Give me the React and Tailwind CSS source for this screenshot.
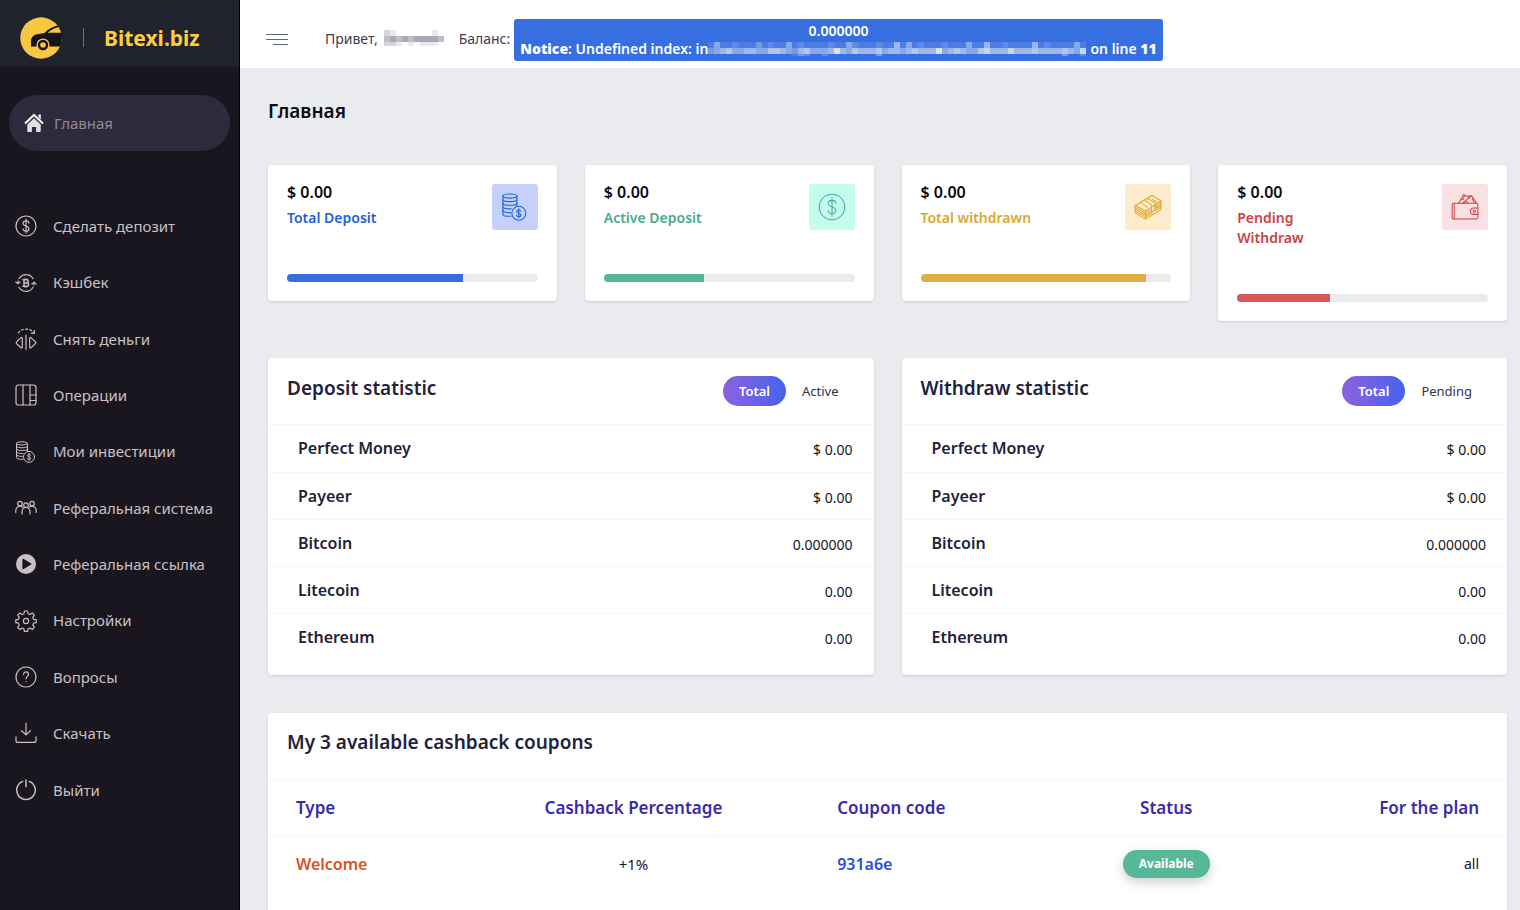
import React from "react";

const Icon = ({ children, className = "size-[22px]" }) => (
    <svg
        viewBox="0 0 22 22"
        className={`${className} shrink-0`}
        fill="none"
        stroke="currentColor"
        strokeWidth="1.2"
        strokeLinecap="round"
        strokeLinejoin="round"
        aria-hidden="true"
    >
        {children}
    </svg>
);

const DollarIcon = ({ className, thin }) => (
    <Icon className={className}>
        <g strokeWidth={thin ? 0.8 : 1.2}>
            <circle cx="11" cy="11" r="10" />
            <path d="M11 4v14M14 8.2c0-1.5-1.3-2.4-3-2.4s-3 .9-3 2.5c0 1.700 1.300 2.200 3 2.700s3 1 3 2.700c0 1.600-1.300 2.500-3 2.500s-3-.9-3-2.400" />
        </g>
    </Icon>
);

const CoinsIcon = ({ className, thin }) => (
    <Icon className={className}>
        <g strokeWidth={thin ? 0.85 : 1}>
            <ellipse cx="7" cy="2.400" rx="5.500" ry="1.600" />
            <path d="M1.500 2.400v14.200c0 1 2.200 1.700 5.500 1.700h.8M12.500 2.400v8" />
            <path d="M1.500 5.200c0 1 2.500 1.600 5.500 1.600s5.500-.6 5.500-1.600M1.500 8c0 1 2.500 1.600 5.500 1.600s5.500-.6 5.500-1.600M1.500 10.900c0 1 2.400 1.600 5.300 1.600h1.200M1.500 13.800c0 1 2.400 1.600 5.300 1.600h.6" />
            <circle cx="14" cy="15.900" r="5.500" />
            <path d="M14 12.400v7M15.600 14.200c-.2-.6-.8-.9-1.600-.9-1 0-1.600.5-1.600 1.200 0 .8.700 1.100 1.600 1.400s1.700.6 1.700 1.400-.7 1.300-1.700 1.300-1.600-.4-1.800-1.100" />
        </g>
    </Icon>
);

const CashIcon = () => (
    <Icon className="size-7">
        <g strokeWidth="0.8">
            <path d="M.9 9.800 14.200 2l7 4.100L9.200 14.200z" />
            <path d="M.9 9.800v5.800l8.300 4.900 12-7.500V6.100M9.200 14.200v6.300" />
            <path d="m.9 11.300 8.300 4.500 3.600-2.300M.9 12.700l8.300 4.600 4-2.500M.9 14.200l8.300 4.600 5-3.100M16.500 10.800l4.700-3M16.500 12.400l4.700-3M16.500 14l4.700-3" />
            <path d="m8.200 5.600 5.600 3.700v5.600l2.500-1.600V7.800l-5.600-3.700M5 7.400l5.700 3.900M14.500 5l3.300 2.100" />
        </g>
    </Icon>
);

const WalletIcon = () => (
    <Icon className="size-7">
        <g strokeWidth="0.8">
            <rect x=".9" y="8" width="20.200" height="12.500" rx="1.300" />
            <path d="M2.500 8v12.500M21.100 11.800h-3.300a2.500 2.500 0 0 0 0 5h3.300" />
            <circle cx="18.300" cy="14.300" r=".9" />
            <path d="M6 8 9.900 1.200l4.400 2.400M9 8l7.200-5.800L20 7.900M16.200 2.200l-2.800.2M7.600 5.300l1.900-.2 1-2.600M9.700 8a2.200 2.200 0 0 1 3.800 0M16.800 4.700l1.500 3.100" />
        </g>
    </Icon>
);

const CashbackIcon = () => (
    <Icon>
        <path d="M4 6.800a8 8 0 0 1 14-.1M18 15.200a8 8 0 0 1-14 .1M2.900 11.500a8 8 0 0 1 .3-2.700M19.100 10.500a8 8 0 0 1-.3 2.700" />
        <path d="m.8 9.800 2 2 2.400-1.700M21.200 12.200l-2-2-2.400 1.700" />
        <path
            d="M9 7.800h2.700a1.500 1.500 0 0 1 0 3.100H9zM9 10.900h3a1.600 1.600 0 0 1 0 3.300H9zM8 7.800h1M8 14.200h1M10 7v.8M12 7v.8M10 14.200v.8M12 14.200v.8"
            strokeWidth="1.500"
        />
    </Icon>
);

const FlipIcon = () => (
    <Icon>
        <path d="M11 7v14.500" />
        <path d="M7.300 10.200v9c0 .7-.8 1-1.300.6l-4.400-4.200a1.200 1.200 0 0 1 0-1.700L6 9.600c.5-.5 1.300-.1 1.300.6zM14.700 10.200v9c0 .7.800 1 1.300.6l4.400-4.200a1.200 1.200 0 0 0 0-1.700L16 9.600c-.5-.5-1.300-.1-1.300.6z" />
        <path d="M3.200 4.800A10.500 10.500 0 0 1 19 4.500" strokeDasharray="2 2.200" />
        <path d="m19.600 2.500-.4 3-2.900-.3" />
    </Icon>
);

const ColumnsIcon = () => (
    <Icon>
        <rect x="1" y="1" width="20" height="20" rx="2.500" />
        <path d="M8 1v20M15 1v20M15 11h6M15 16.500h6" />
    </Icon>
);

const PeopleIcon = () => (
    <Icon>
        <circle cx="11" cy="8.200" r="2.300" />
        <circle cx="5" cy="6.600" r="2.300" />
        <circle cx="17" cy="6.600" r="2.300" />
        <path d="M7 17v-2.500a4 4 0 0 1 8 0V17M.8 15.500v-2a4.200 4.200 0 0 1 6.800-3.300M21.200 15.500v-2a4.200 4.200 0 0 0-6.800-3.300" />
    </Icon>
);

const PlayIcon = () => (
    <Icon>
        <circle cx="11" cy="11" r="10" fill="currentColor" stroke="none" />
        <path d="M8 6.300v9.400l7.800-4.700z" fill="#19161f" stroke="#19161f" />
    </Icon>
);

const GearIcon = () => (
    <Icon>
        <circle cx="11" cy="11" r="2.600" />
        <path d="M9.400 1h3.200l.5 2.700 1.800.8 2.300-1.600 2.200 2.200-1.600 2.300.8 1.900 2.600.4v3l-2.600.5-.8 1.900 1.600 2.300-2.200 2.200-2.300-1.600-1.800.8-.5 2.600H9.400l-.5-2.600-1.800-.8-2.300 1.600-2.200-2.200 1.600-2.300-.8-1.900L.8 12.700v-3l2.600-.4.800-1.900-1.600-2.300 2.200-2.200 2.300 1.600 1.800-.8z" />
    </Icon>
);

const QuestionIcon = () => (
    <Icon>
        <circle cx="11" cy="11" r="10" />
        <path d="M8.500 8.300a2.500 2.500 0 1 1 3.900 2.100c-.9.700-1.400 1.200-1.400 2.300M11 15.500v.2" />
    </Icon>
);

const DownloadIcon = () => (
    <Icon>
        <path d="M11 1.200v11.600M6.600 8.700l4.400 4.200 4.400-4.200M1 14.800v3.600a2 2 0 0 0 2 2h16a2 2 0 0 0 2-2v-3.600" />
    </Icon>
);

const PowerIcon = () => (
    <Icon>
        <path d="M11 .9v6.900M7.700 2.400a9.300 9.300 0 1 0 6.600 0" strokeWidth="1.500" />
    </Icon>
);

const HomeIcon = () => (
    <svg viewBox="0 0 20 20" className="size-5 shrink-0" aria-hidden="true">
        <path d="M1 10.500 10 2l9 8.500" fill="none" stroke="#fff" strokeWidth="2" />
        <path d="M14.500 1.500h2.300v5l-2.300-2.200z" fill="#fff" />
        <path
            d="M10 5.200 3.300 11.500v6.200c0 .8.500 1.300 1.300 1.300h3.300v-5h4.200v5h3.300c.8 0 1.300-.5 1.300-1.300v-6.200z"
            fill="#e6dcde"
        />
    </svg>
);

const Logo = () => (
    <svg viewBox="0 0 42 42" className="size-[42px]" aria-hidden="true">
        <circle cx="21" cy="21" r="20.700" fill="#f7c744" />
        <path
            d="M11 29.500v-5c0-4.600 2.500-6.500 6.500-7.300l7-1.200c4.500-4.300 8.500-6.300 13.200-7.400l.8 1.300c-4 1-7.500 2.800-10.800 5.800h14c.5 4.800 0 9.500-1.500 13.800z"
            fill="#14141a"
        />
        <circle cx="23" cy="28" r="6.600" fill="#f7c744" />
        <circle cx="23" cy="28" r="4" fill="none" stroke="#14141a" strokeWidth="2.400" />
    </svg>
);

// each digit is the strength of one block, 0 - 9
const Mosaic = ({ rows, color, label, height, className }) => (
    <svg
        role="img"
        aria-label={label}
        viewBox={`0 0 ${rows[0].length * 6} ${height}`}
        className={`shrink-0 ${className}`}
        shapeRendering="crispEdges"
    >
        {rows.map((row, y) =>
            row.split("").map((v, x) => (
                <rect
                    key={`${x}-${y}`}
                    x={x * 6}
                    y={y * 6}
                    width="6"
                    height="6"
                    fill={color}
                    opacity={v / 10}
                />
            ))
        )}
    </svg>
);

const nameBlocks = ["2100000010", "3434344443", "2210101110"];
const pathBlocks = [
    "141121113121141211112114211121151412111211141151121111512111141",
    "345644554466543564445854655564554565558456544675557555655556547",
    "000000000000001320020000000030000000000000000000000000000003002",
];

const menu = [
    { label: "Сделать депозит", icon: <DollarIcon /> },
    { label: "Кэшбек", icon: <CashbackIcon /> },
    { label: "Снять деньги", icon: <FlipIcon /> },
    { label: "Операции", icon: <ColumnsIcon /> },
    { label: "Мои инвестиции", icon: <CoinsIcon /> },
    { label: "Реферальная система", icon: <PeopleIcon /> },
    { label: "Реферальная ссылка", icon: <PlayIcon /> },
    { label: "Настройки", icon: <GearIcon /> },
    { label: "Вопросы", icon: <QuestionIcon /> },
    { label: "Скачать", icon: <DownloadIcon /> },
    { label: "Выйти", icon: <PowerIcon /> },
];

const cards = [
    {
        title: "Total Deposit",
        text: "text-[#2160dc]",
        box: "bg-[#c5d1fb]",
        bar: "bg-[#376fe0]",
        percent: 70,
        icon: <CoinsIcon className="size-7" thin />,
    },
    {
        title: "Active Deposit",
        text: "text-[#45ad8e]",
        box: "bg-[#c4fdee]",
        bar: "bg-[#55b799]",
        percent: 40,
        icon: <DollarIcon className="size-7" thin />,
    },
    {
        title: "Total withdrawn",
        text: "text-[#dda82f]",
        box: "bg-[#fcebcc]",
        bar: "bg-[#dfae45]",
        percent: 90,
        icon: <CashIcon />,
    },
    {
        title: "Pending Withdraw",
        text: "text-[#d13f42]",
        box: "bg-[#f9e0e2]",
        bar: "bg-[#d65a5b]",
        percent: 37,
        icon: <WalletIcon />,
    },
];

const balances = [
    ["Perfect Money", "$ 0.00"],
    ["Payeer", "$ 0.00"],
    ["Bitcoin", "0.000000"],
    ["Litecoin", "0.00"],
    ["Ethereum", "0.00"],
];

const Sidebar = () => (
    <aside className="w-60 shrink-0 border-r border-black bg-[#19161f]">
        <a href="#" className="flex h-[67px] items-center bg-[#20222d] pt-2 pl-5">
            <Logo />
            <span className="ml-[21px] h-[19px] w-px bg-[#6d6e76]" />
            <span className="ml-5 pt-0.5 text-[21px] font-bold text-[#fbcd45]">Bitexi.biz</span>
        </a>
        <nav>
            <a
                href="#"
                className="mx-[9px] mt-7 flex h-14 items-center gap-2.5 rounded-full bg-[#2c2a3c] pl-[15px] text-[15px] text-[#8f8b93]"
            >
                <HomeIcon />
                Главная
            </a>
            <ul className="mt-[47px] grid h-[620px] auto-rows-fr">
                {menu.map((item) => (
                    <li key={item.label} className="flex">
                        <a
                            href="#"
                            className="flex flex-1 items-center gap-4 pl-[15px] text-[15px] whitespace-nowrap text-[#c9c0c3]"
                        >
                            {item.icon}
                            {item.label}
                        </a>
                    </li>
                ))}
            </ul>
        </nav>
    </aside>
);

const Header = () => (
    <header className="flex h-[68px] items-center bg-white pt-3 pl-[26px] text-sm text-[#3c3c4e]">
        <button type="button" aria-label="Menu" className="mb-0.5 flex w-[22px] flex-col items-end gap-1">
            <span className="h-px w-full bg-[#5f6786]" />
            <span className="h-px w-full bg-[#5f6786]" />
            <span className="h-px w-[15px] bg-[#5f6786]" />
        </button>
        <span className="mb-0.5 ml-[37px]">Привет,</span>
        <Mosaic
            rows={nameBlocks}
            color="#2a2840"
            label="Имя"
            height={16}
            className="mb-1 ml-1.5 h-4 w-[60px]"
        />
        <span className="mb-0.5 ml-[15px]">Баланс:</span>
        <div className="ml-1 rounded-[3px] bg-[#376fe0] px-1.5 py-[3px] text-center text-sm leading-[18px] font-semibold whitespace-nowrap text-white">
            <p>0.000000</p>
            <p className="flex items-center">
                <span>
                    <b>Notice</b>: Undefined index: in
                </span>
                <Mosaic
                    rows={pathBlocks}
                    color="#fff"
                    label="Путь"
                    height={14}
                    className="mr-1 h-3.5 w-[378px]"
                />
                <span>
                    on line <b>11</b>
                </span>
            </p>
        </div>
    </header>
);

const StatCard = ({ card }) => (
    <div className="rounded bg-white p-[19px] shadow-sm">
        <div className="flex items-start justify-between">
            <div className="pb-0.5">
                <p className="text-base leading-4 font-semibold text-[#0b0b16]">$ 0.00</p>
                <p className={`mt-2 max-w-28 text-sm leading-5 font-semibold ${card.text}`}>{card.title}</p>
            </div>
            <span
                className={`flex size-[46px] items-center justify-center rounded-[3px] ${card.box} ${card.text}`}
            >
                {card.icon}
            </span>
        </div>
        <div className="mt-11 h-2 overflow-hidden rounded-full bg-[#eaebef]">
            <div className={`h-full ${card.bar}`} style={{ width: `${card.percent}%` }} />
        </div>
    </div>
);

const Statistic = ({ title, second }) => (
    <section className="rounded bg-white pb-[15px] text-[#22223a] shadow-sm">
        <div className="flex h-[67px] items-center justify-between border-b border-[#f6f6f8] px-[19px]">
            <h2 className="pb-1.5 text-[19px] font-semibold">{title}</h2>
            <div className="flex pb-px text-[13px] leading-5">
                <button
                    type="button"
                    className="rounded-full bg-gradient-to-r from-[#8b62dc] to-[#4361ee] px-4 py-[5px] font-semibold text-white"
                >
                    Total
                </button>
                <button type="button" className="px-4 py-[5px] text-[#33324a]">
                    {second}
                </button>
            </div>
        </div>
        <table className="w-full">
            <tbody className="divide-y divide-[#f6f6f8]">
                {balances.map(([name, value]) => (
                    <tr key={name} className="h-[47px]">
                        <th scope="row" className="pl-[30px] text-left text-base font-semibold">
                            {name}
                        </th>
                        <td className="pt-1 pr-[21px] text-right text-sm text-[#15151f]">{value}</td>
                    </tr>
                ))}
            </tbody>
        </table>
    </section>
);

const Coupons = () => (
    <section className="flex-1 rounded-t bg-white shadow-sm">
        <h2 className="flex h-[67px] items-center px-[19px] pb-2 text-[19px] font-semibold text-[#22223a]">
            My 3 available cashback coupons
        </h2>
        <table className="w-full table-fixed">
            <thead>
                <tr className="h-[55px] border-y border-[#f4f4f6] text-[17px] text-[#3a2ba8]">
                    <th className="w-[15%] px-7 text-left font-semibold">Type</th>
                    <th className="w-[29%] px-7 font-semibold">Cashback Percentage</th>
                    <th className="w-[20%] px-6 text-left font-semibold">Coupon code</th>
                    <th className="w-[17%] px-7 font-semibold">Status</th>
                    <th className="px-7 text-right font-semibold">For the plan</th>
                </tr>
            </thead>
            <tbody>
                <tr className="h-14 text-base text-[#15151f]">
                    <td className="px-7 font-semibold text-[#d9531e]">Welcome</td>
                    <td className="px-7 text-center text-[15px]">+1%</td>
                    <td className="px-6 font-semibold text-[#2a4fe0]">931a6e</td>
                    <td className="text-center">
                        <span className="inline-block rounded-full bg-[#57b799] px-4 py-1 text-xs leading-5 font-bold text-white shadow-[0_4px_12px_rgba(0,0,0,0.2)]">
                            Available
                        </span>
                    </td>
                    <td className="px-7 text-right text-sm">all</td>
                </tr>
            </tbody>
        </table>
    </section>
);

const App = () => {
    return (
        <div className="flex min-h-screen bg-[#eaebef] font-['Noto_Sans','Open_Sans',sans-serif]">
            <Sidebar />
            <div className="flex min-w-0 flex-1 flex-col">
                <Header />
                <main className="flex flex-1 flex-col pr-[13px] pl-7">
                    <h1 className="mt-[29px] text-[19px] leading-7 font-semibold text-[#0b0b16]">Главная</h1>
                    <div className="mt-10 grid grid-cols-4 items-start gap-7">
                        {cards.map((card) => (
                            <StatCard key={card.title} card={card} />
                        ))}
                    </div>
                    <div className="mt-[37px] grid grid-cols-2 gap-7">
                        <Statistic title="Deposit statistic" second="Active" />
                        <Statistic title="Withdraw statistic" second="Pending" />
                    </div>
                    <div className="mt-[38px] flex flex-1 flex-col">
                        <Coupons />
                    </div>
                </main>
            </div>
        </div>
    );
};

export default App;
